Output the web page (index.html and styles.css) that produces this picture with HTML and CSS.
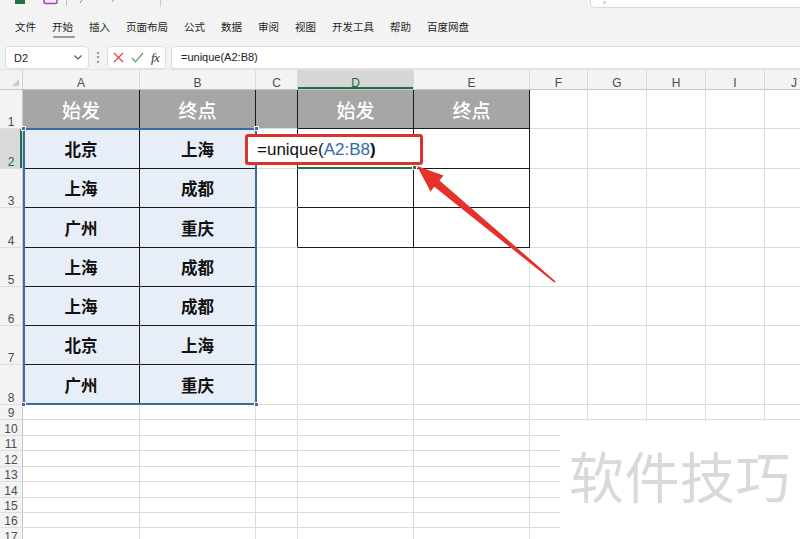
FILE: index.html
```html
<!DOCTYPE html>
<html lang="zh">
<head>
<meta charset="utf-8">
<title>Excel</title>
<link rel="stylesheet" href="styles.css">
</head>
<body>
<div class="app">
  <header class="topbar">
    <div class="qa">
      <svg class="qa-icons" width="200" height="8" viewBox="0 0 200 8">
        <rect x="15" y="0" width="10" height="4" fill="#1f7244"/>
        <path d="M44 0 V2 Q44 3.5 46 3.5 H55 Q57 3.5 57 2 V0" fill="#f4e7f6" stroke="#a34aa8" stroke-width="1.5"/>
        <line x1="66.5" y1="0" x2="66.5" y2="6" stroke="#c4c4c4"/>
        <line x1="82" y1="0" x2="80" y2="3" stroke="#8a8a8a"/>
        <line x1="114" y1="0" x2="112" y2="2" stroke="#9a9a9a"/>
        <line x1="160.5" y1="0" x2="160.5" y2="7" stroke="#c8c8c8"/>
      </svg>
      <div class="search"><span class="search-mark"></span></div>
    </div>
    <nav class="tabs">
      <span>文件</span>
      <span class="active">开始</span>
      <span>插入</span>
      <span>页面布局</span>
      <span>公式</span>
      <span>数据</span>
      <span>审阅</span>
      <span>视图</span>
      <span>开发工具</span>
      <span>帮助</span>
      <span>百度网盘</span>
    </nav>
  </header>

  <div class="fbar">
    <div class="namebox">
      <span>D2</span>
      <svg width="8" height="5" viewBox="0 0 8 5"><path d="M0.5 0.5 L4 4 L7.5 0.5" fill="none" stroke="#555" stroke-width="1.1"/></svg>
    </div>
    <span class="dots">⋮</span>
    <div class="fbtns">
      <svg width="11" height="11" viewBox="0 0 11 11"><path d="M1 1 L10 10 M10 1 L1 10" stroke="#e0443f" stroke-width="1.2" fill="none"/></svg>
      <svg width="13" height="11" viewBox="0 0 13 11"><path d="M1 6 L4.5 9.8 L12 1" stroke="#53a35f" stroke-width="1.2" fill="none"/></svg>
      <span class="fx">fx</span>
    </div>
    <div class="finput">=unique(A2:B8)</div>
  </div>

  <div class="sheet">
    <table class="grid">
      <colgroup>
        <col class="c-rh"><col class="c-w"><col class="c-w2"><col class="c-c"><col class="c-w2"><col class="c-w2"><col class="c-f"><col class="c-n"><col class="c-n"><col class="c-n"><col class="c-n">
      </colgroup>
      <tr class="r-hdr">
        <td class="corner"><span class="tri"></span></td>
        <td class="ch">A</td><td class="ch">B</td><td class="ch">C</td><td class="ch ch-sel">D</td><td class="ch">E</td><td class="ch">F</td><td class="ch">G</td><td class="ch">H</td><td class="ch">I</td><td class="ch">J</td>
      </tr>
      <tr class="r39">
        <td class="rh">1</td>
        <td class="h1 bk-r bk-b">始发</td><td class="h1 bk-r bk-b">终点</td><td class="h1 bk-r"></td><td class="h1 bk-r bk-b">始发</td><td class="h1 bk-r bk-b">终点</td><td></td><td></td><td></td><td></td><td></td>
      </tr>
      <tr class="r40">
        <td class="rh rh-sel">2</td>
        <td class="dt bk-r bk-b">北京</td><td class="dt bk-r bk-b">上海</td><td class="bk-r"></td><td class="bk-r"></td><td class="bk-r bk-b"></td><td></td><td></td><td></td><td></td><td></td>
      </tr>
      <tr class="r39">
        <td class="rh">3</td>
        <td class="dt bk-r bk-b">上海</td><td class="dt bk-r bk-b">成都</td><td class="bk-r"></td><td class="bk-r bk-b"></td><td class="bk-r bk-b"></td><td></td><td></td><td></td><td></td><td></td>
      </tr>
      <tr class="r40">
        <td class="rh">4</td>
        <td class="dt bk-r bk-b">广州</td><td class="dt bk-r bk-b">重庆</td><td class="bk-r"></td><td class="bk-r bk-b"></td><td class="bk-r bk-b"></td><td></td><td></td><td></td><td></td><td></td>
      </tr>
      <tr class="r39">
        <td class="rh">5</td>
        <td class="dt bk-r bk-b">上海</td><td class="dt bk-r bk-b">成都</td><td></td><td></td><td></td><td></td><td></td><td></td><td></td><td></td>
      </tr>
      <tr class="r39">
        <td class="rh">6</td>
        <td class="dt bk-r bk-b">上海</td><td class="dt bk-r bk-b">成都</td><td></td><td></td><td></td><td></td><td></td><td></td><td></td><td></td>
      </tr>
      <tr class="r39">
        <td class="rh">7</td>
        <td class="dt bk-r bk-b">北京</td><td class="dt bk-r bk-b">上海</td><td></td><td></td><td></td><td></td><td></td><td></td><td></td><td></td>
      </tr>
      <tr class="r40">
        <td class="rh">8</td>
        <td class="dt bk-r">广州</td><td class="dt">重庆</td><td></td><td></td><td></td><td></td><td></td><td></td><td></td><td></td>
      </tr>
      <tr class="r15"><td class="rh">9</td><td></td><td></td><td></td><td></td><td></td><td></td><td></td><td></td><td></td><td></td></tr>
      <tr class="r16"><td class="rh">10</td><td></td><td></td><td></td><td></td><td></td><td></td><td></td><td></td><td></td><td></td></tr>
      <tr class="r15"><td class="rh">11</td><td></td><td></td><td></td><td></td><td></td><td></td><td></td><td></td><td></td><td></td></tr>
      <tr class="r16"><td class="rh">12</td><td></td><td></td><td></td><td></td><td></td><td></td><td></td><td></td><td></td><td></td></tr>
      <tr class="r15"><td class="rh">13</td><td></td><td></td><td></td><td></td><td></td><td></td><td></td><td></td><td></td><td></td></tr>
      <tr class="r16"><td class="rh">14</td><td></td><td></td><td></td><td></td><td></td><td></td><td></td><td></td><td></td><td></td></tr>
      <tr class="r15"><td class="rh">15</td><td></td><td></td><td></td><td></td><td></td><td></td><td></td><td></td><td></td><td></td></tr>
      <tr class="r15"><td class="rh">16</td><td></td><td></td><td></td><td></td><td></td><td></td><td></td><td></td><td></td><td></td></tr>
      <tr class="r16"><td class="rh">17</td><td></td><td></td><td></td><td></td><td></td><td></td><td></td><td></td><td></td><td></td></tr>
    </table>
  </div>

  <div class="selrange">
    <span class="hd hd-tl"></span><span class="hd hd-tr"></span><span class="hd hd-bl"></span><span class="hd hd-br"></span>
  </div>
  <div class="selcell"><span class="hd-g"></span></div>

  <div class="redbox">=unique(<span class="ref">A2:B8</span><b>)</b></div>

  <svg class="arrow" width="800" height="539" viewBox="0 0 800 539">
    <polygon points="417,166 443.5,175.5 439.5,180.5 555.7,281.5 554.3,282.5 434.3,186.7 430.5,191.5" fill="#e5312a"/>
  </svg>

  <div class="wm">软件技巧</div>
</div>
</body>
</html>
```

FILE: styles.css
```css
* { box-sizing: border-box; }

body {
  margin: 0;
  background: #f3f3f3;
  font-family: "Liberation Sans", "Noto Sans CJK SC", sans-serif;
}

.app {
  position: relative;
  width: 800px;
  height: 539px;
  overflow: hidden;
  background: #f3f3f3;
}

/* ---------- top ribbon ---------- */
.topbar { height: 44px; }

.qa {
  height: 8px;
  display: flex;
  align-items: flex-start;
}
.qa-icons { display: block; }

.search {
  margin-left: auto;
  width: 210px;
  height: 8px;
  background: #fff;
  border: 1px solid #d9d9d9;
  border-top: 0;
  border-right: 0;
  border-radius: 0 0 0 5px;
  padding-left: 13px;
}
.search-mark {
  display: block;
  width: 1px;
  height: 3px;
  margin-top: 1px;
  background: #999;
  transform: rotate(35deg);
}

.tabs {
  height: 36px;
  display: flex;
  align-items: center;
  gap: 16px;
  padding: 2px 0 0 15px;
  font-family: "Noto Sans CJK SC", sans-serif;
  font-size: 10.5px;
  color: #262626;
}
.tabs span { position: relative; line-height: 14px; }
.tabs .active::after {
  content: "";
  position: absolute;
  left: 1px;
  right: -2px;
  bottom: -4px;
  height: 2px;
  border-radius: 1px;
  background: #9a9a9a;
}

/* ---------- formula bar ---------- */
.fbar {
  height: 26px;
  display: flex;
  align-items: flex-start;
  padding: 2px 0 0 5px;
  border-bottom: 1px solid #e4e4e4;
}
.namebox {
  width: 84px;
  height: 23px;
  background: #fff;
  border: 1px solid #dedede;
  border-radius: 4px;
  display: flex;
  align-items: center;
  justify-content: space-between;
  padding: 0 6px 0 8px;
  font-size: 11px;
  color: #222;
}
.dots {
  width: 18px;
  text-align: center;
  line-height: 23px;
  font-size: 12px;
  color: #666;
}
.fbtns {
  width: 59px;
  height: 23px;
  background: #fff;
  border: 1px solid #dedede;
  border-radius: 4px;
  display: flex;
  align-items: center;
  gap: 7px;
  padding-left: 5px;
}
.fx {
  font-family: "Liberation Serif", serif;
  font-style: italic;
  font-size: 13px;
  color: #333;
  letter-spacing: -0.5px;
}
.finput {
  flex: 1;
  height: 23px;
  margin-left: 5px;
  background: #fff;
  border: 1px solid #dedede;
  border-right: 0;
  border-radius: 4px 0 0 4px;
  padding-left: 9px;
  font-size: 11px;
  line-height: 21px;
  color: #222;
}

/* ---------- sheet ---------- */
.sheet {
  height: 469px;
  overflow: hidden;
  background: #fff;
}
.grid {
  border-collapse: separate;
  border-spacing: 0;
  table-layout: fixed;
  width: 824px;
}
.c-rh { width: 23px; }
.c-w { width: 117px; }
.c-w2 { width: 116px; }
.c-c { width: 42px; }
.c-f { width: 58px; }
.c-n { width: 59px; }

.grid td {
  padding: 0;
  border-right: 1px solid #dcdcdc;
  border-bottom: 1px solid #dcdcdc;
  text-align: center;
  vertical-align: middle;
  white-space: nowrap;
}

.r-hdr { height: 20px; }
.r39 { height: 39px; }
.r40 { height: 40px; }
.r15 { height: 15px; }
.r16 { height: 16px; }

.grid td.corner {
  position: relative;
  background: #f3f3f3;
  border-right-color: #d0d0d0;
  border-bottom-color: #c6c6c6;
}
.tri {
  position: absolute;
  right: 3px;
  bottom: 3px;
  width: 0;
  height: 0;
  border-left: 7px solid transparent;
  border-bottom: 7px solid #cacaca;
}

.grid td.ch {
  background: #f3f3f3;
  color: #4d4d4d;
  font-size: 12px;
  line-height: 12px;
  vertical-align: bottom;
  border-right-color: #dadada;
  border-bottom-color: #c6c6c6;
}
.grid td.ch-sel {
  background: #d6d6d6;
  color: #1d6b3b;
  box-shadow: inset 0 -2px 0 #217346;
}

.grid td.rh {
  background: #f3f3f3;
  color: #4d4d4d;
  font-size: 12px;
  line-height: 11px;
  vertical-align: bottom;
  border-right-color: #c8c8c8;
  border-bottom-color: #dedede;
}
.grid td.rh-sel {
  background: #d9d9d9;
  color: #1d6b3b;
  box-shadow: inset -2px 0 0 #217346;
}

.grid td.h1 {
  background: #a6a6a6;
  color: #fff;
  font-family: "Noto Sans CJK SC", sans-serif;
  font-weight: 500;
  font-size: 19px;
}
.grid td.dt {
  background: #e8eef8;
  color: #111;
  font-family: "Noto Sans CJK SC", sans-serif;
  font-weight: 700;
  font-size: 16.5px;
}
.grid td.bk-r { border-right-color: #1a1a1a; }
.grid td.bk-b { border-bottom-color: #1a1a1a; }

/* ---------- overlays ---------- */
.selrange {
  position: absolute;
  left: 23px;
  top: 128px;
  width: 234px;
  height: 277px;
  border: 2px solid #3d6aa5;
}
.hd {
  position: absolute;
  width: 5px;
  height: 5px;
  background: #3d6aa5;
  border: 1px solid #fff;
}
.hd-tl { left: -4px; top: -4px; }
.hd-tr { right: -4px; top: -4px; }
.hd-bl { left: -4px; bottom: -4px; }
.hd-br { right: -4px; bottom: -4px; }

.selcell {
  position: absolute;
  left: 298px;
  top: 167px;
  width: 116px;
  height: 2px;
  background: #217346;
}
.hd-g {
  position: absolute;
  right: -3px;
  top: -2px;
  width: 5px;
  height: 5px;
  background: #217346;
  border: 1px solid #fff;
}

.redbox {
  position: absolute;
  left: 245px;
  top: 134px;
  width: 178px;
  height: 31px;
  background: #fff;
  border: 3px solid #d8342b;
  border-radius: 3px;
  padding-left: 9px;
  font-size: 17px;
  line-height: 25px;
  color: #111;
}
.redbox .ref { color: #3466ad; }
.redbox b { font-weight: 700; }

.arrow {
  position: absolute;
  left: 0;
  top: 0;
}

.wm {
  position: absolute;
  left: 560px;
  top: 421px;
  width: 240px;
  height: 118px;
  background: #fff;
  padding: 26px 0 0 9px;
  font-family: "Noto Sans CJK SC", sans-serif;
  font-size: 55px;
  line-height: 1;
  color: #d9d9d9;
  letter-spacing: 0.5px;
}
```
